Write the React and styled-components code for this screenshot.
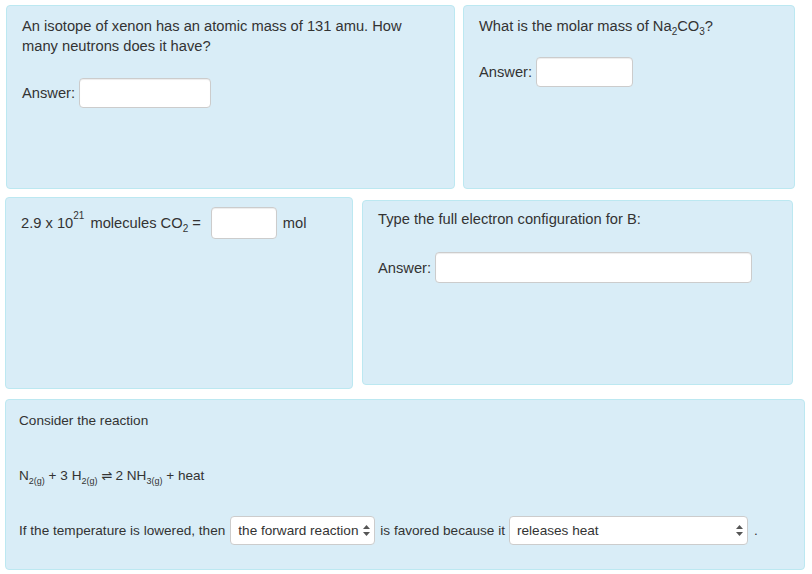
import React from 'react';
import styled, { createGlobalStyle } from 'styled-components';

const Global = createGlobalStyle`
  body {
    margin: 0;
    background: #fff;
    font-family: "Liberation Sans", Arial, sans-serif;
    font-size: 14px;
    color: #333;
  }
`;

const Page = styled.div`
  padding: 5px 0 0 5px;
  display: flex;
  flex-direction: column;
`;

const Row = styled.div`
  display: flex;
  align-items: flex-start;
  gap: ${({ $gap }) => $gap}px;
  margin-top: ${({ $mt }) => $mt || 0}px;
  padding-left: ${({ $pl }) => $pl || 0}px;
`;

const Card = styled.div`
  box-sizing: border-box;
  width: ${({ $w }) => $w}px;
  height: ${({ $h }) => $h}px;
  margin-top: ${({ $mt }) => $mt || 0}px;
  padding: ${({ $pt }) => $pt || 10}px 15px 10px ${({ $pl }) => $pl || 15}px;
  background: #d9edf7;
  border: 1px solid #bce8f1;
  border-radius: 4px;
  font-size: ${({ $fs }) => $fs || 14.7}px;
  line-height: 20px;
`;

const Text = styled.p`
  margin: 0 0 ${({ $mb }) => $mb || 0}px 0;
  line-height: 20px;
`;

const Sub = styled.sub`
  font-size: ${({ $small }) => ($small ? 9 : 10)}px;
  line-height: 0;
  vertical-align: -4px;
`;

const Sup = styled.sup`
  font-size: 10px;
  line-height: 0;
  vertical-align: 9px;
  margin-right: 6px;
`;

const AnswerRow = styled.div`
  display: flex;
  align-items: center;
  gap: ${({ $gap }) => $gap || 4}px;
`;

const Input = styled.input`
  box-sizing: border-box;
  width: ${({ $w }) => $w}px;
  height: ${({ $h }) => $h || 30}px;
  border: 1px solid #ccc;
  border-radius: 4px;
  background: #fff;
  box-shadow: inset 0 1px 1px rgba(0, 0, 0, 0.075);
  font: inherit;
  padding: 4px 8px;
  margin: 0 0 0 ${({ $ml }) => $ml || 0}px;
`;

const SelectWrap = styled.span`
  position: relative;
  display: inline-flex;
  margin: 0 ${({ $mr }) => $mr || 0}px 0 ${({ $ml }) => $ml || 0}px;
`;

const Select = styled.select`
  appearance: none;
  -webkit-appearance: none;
  box-sizing: border-box;
  width: ${({ $w }) => $w}px;
  height: 29px;
  border: 1px solid #ccc;
  border-radius: 4px;
  background: #fff;
  color: #333;
  font: inherit;
  padding: 0 12px 0 7px;
  margin: 0;
`;

const Arrows = styled.svg`
  position: absolute;
  right: 5px;
  top: 9px;
  pointer-events: none;
`;

const Equation = styled.span`
  white-space: nowrap;
`;

const Harpoon = styled.span`
  font-family: "DejaVu Sans", sans-serif;
  font-size: 13px;
  margin: 0 3px 0 4px;
`;

function Dropdown({ width, value, ml, mr }) {
  return (
    <SelectWrap $ml={ml} $mr={mr}>
      <Select $w={width} defaultValue={value}>
        <option>{value}</option>
      </Select>
      <Arrows width="7" height="11" viewBox="0 0 7 11">
        <path d="M3.5 0 L7 4 L0 4 Z" fill="#555" />
        <path d="M3.5 11 L7 7 L0 7 Z" fill="#555" />
      </Arrows>
    </SelectWrap>
  );
}

export default function App() {
  return (
    <>
      <Global />
      <Page>
        <Row $gap={8} $pl={1}>
          <Card $w={449} $h={184}>
            <Text $mb={22}>
              An isotope of xenon has an atomic mass of 131 amu. How
              <br />
              many neutrons does it have?
            </Text>
            <AnswerRow>
              <span>Answer:</span>
              <Input $w={132} />
            </AnswerRow>
          </Card>
          <Card $w={332} $h={184}>
            <Text $mb={21}>
              What is the molar mass of Na<Sub>2</Sub>CO<Sub>3</Sub>?
            </Text>
            <AnswerRow>
              <span>Answer:</span>
              <Input $w={97} />
            </AnswerRow>
          </Card>
        </Row>
        <Row $gap={9} $mt={8}>
          <Card $w={348} $h={192} $pt={9}>
            <AnswerRow $gap={6}>
              <span>
                2.9 x 10<Sup>21</Sup>molecules CO<Sub>2</Sub> =
              </span>
              <Input $w={66} $h={32} $ml={4} />
              <span>mol</span>
            </AnswerRow>
          </Card>
          <Card $w={431} $h={185} $mt={3} $pt={8}>
            <Text $mb={23}>Type the full electron configuration for B:</Text>
            <AnswerRow>
              <span>Answer:</span>
              <Input $w={317} $h={31} />
            </AnswerRow>
          </Card>
        </Row>
        <Row $gap={0} $mt={10}>
          <Card $w={800} $h={171} $pt={11} $pl={13} $fs={13.6}>
            <Text $mb={35}>Consider the reaction</Text>
            <Text $mb={30}>
              <Equation>
                N<Sub $small>2(g)</Sub> + 3 H<Sub $small>2(g)</Sub>
                <Harpoon>⇌</Harpoon>2 NH<Sub $small>3(g)</Sub> + heat
              </Equation>
            </Text>
            <AnswerRow $gap={0}>
              <span>If the temperature is lowered, then</span>
              <Dropdown width={145} value="the forward reaction" ml={1} mr={1} />
              <span>is favored because it</span>
              <Dropdown width={239} value="releases heat" ml={0} mr={2} />
              <span>.</span>
            </AnswerRow>
          </Card>
        </Row>
      </Page>
    </>
  );
}
